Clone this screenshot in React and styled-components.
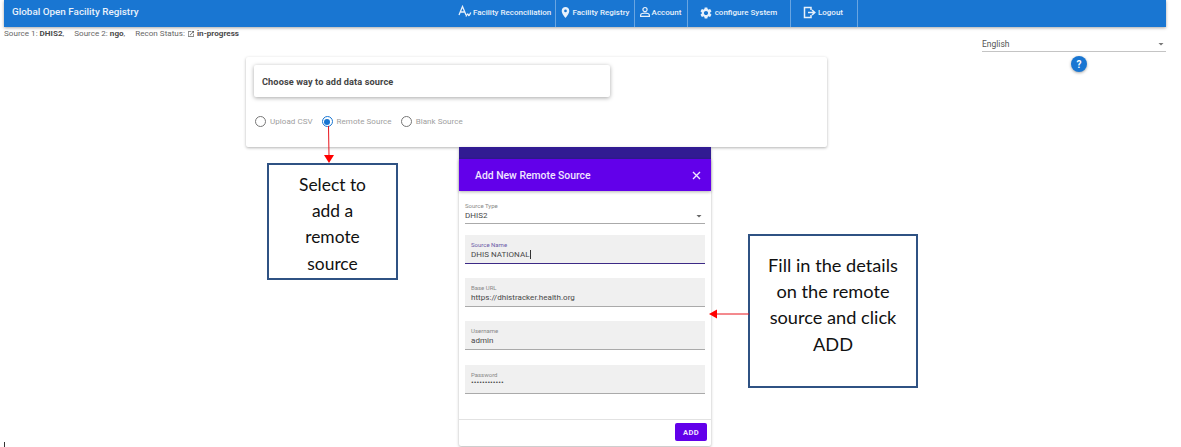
import React from "react";
import styled, { createGlobalStyle } from "styled-components";
import { MdLocationOn, MdSettings, MdArrowDropDown, MdOpenInNew } from "react-icons/md";

const Global = createGlobalStyle`
  html, body { margin: 0; padding: 0; background: #fff; }
  body { font-family: Roboto, "Liberation Sans", sans-serif; overflow: hidden; }
  * { box-sizing: border-box; }
`;

const Page = styled.div`
  position: relative;
  width: 1181px;
  height: 447px;
  overflow: hidden;
  background: #fff;
`;

const Bar = styled.header`
  display: flex;
  align-items: stretch;
  width: 1162px;
  height: 27px;
  margin-left: 4px;
  background: #1976d2;
  box-shadow: 0 1px 3px rgba(0, 0, 0, 0.35);
  color: #fff;
`;

const Title = styled.div`
  width: 447px;
  padding-left: 8px;
  line-height: 24px;
  font-size: 9.9px;
  font-weight: 500;
  color: #e8f1fb;
`;

const NavItem = styled.div`
  display: flex;
  align-items: center;
  justify-content: ${(p) => (p.$left ? "flex-start" : "center")};
  gap: ${(p) => p.$gap ?? 1}px;
  width: ${(p) => p.$w}px;
  padding: 0 ${(p) => (p.$left ? 0 : 2)}px ${(p) => p.$lift ?? 3}px ${(p) => p.$pad || 0}px;
  border-right: 1px solid rgba(255, 255, 255, 0.35);
  font-size: 8px;
  font-weight: 500;
  white-space: nowrap;
  color: #e8f1fb;
  svg { flex: none; }
`;

const StatusRow = styled.div`
  display: flex;
  justify-content: space-between;
  align-items: flex-start;
  height: 30px;
`;

const Status = styled.div`
  padding: 1px 0 0 4px;
  font-size: 8.1px;
  line-height: 10px;
  color: #666;
  white-space: pre;
  b { color: #4a4a4a; font-weight: 700; }
  svg { vertical-align: -2px; margin: 0 2px 0 0; }
`;

const LangColumn = styled.div`
  display: flex;
  flex-direction: column;
  align-items: center;
  width: 184px;
  margin: 10px 15px 0 0;
`;

const LangSelect = styled.div`
  display: flex;
  align-items: center;
  justify-content: space-between;
  width: 100%;
  height: 15px;
  border-bottom: 1px solid #c4c4c4;
  font-size: 8.5px;
  color: #555;
  svg { margin-right: -1px; color: #777; }
`;

const HelpDot = styled.div`
  display: flex;
  align-items: center;
  justify-content: center;
  width: 16px;
  height: 16px;
  margin: 4px 0 0 10px;
  border-radius: 50%;
  background: #1976d2;
  box-shadow: 0 1px 3px rgba(0, 0, 0, 0.35);
  color: #fff;
  font-size: 10px;
  font-weight: 700;
`;

const SourceCard = styled.section`
  width: 581px;
  height: 90px;
  margin-left: 246px;
  padding: 8px;
  border-radius: 2px;
  background: #fff;
  box-shadow: 0 1px 3px rgba(0, 0, 0, 0.3);
`;

const InnerCard = styled.div`
  display: flex;
  align-items: center;
  width: 356px;
  height: 32px;
  padding-left: 8px;
  border-radius: 2px;
  box-shadow: 0 1px 4px rgba(0, 0, 0, 0.35);
  font-size: 9.2px;
  letter-spacing: 0.1px;
  font-weight: 700;
  color: #444;
`;

const RadioRow = styled.div`
  display: flex;
  align-items: center;
  margin-top: 19px;
  padding-left: 1px;
`;

const Radio = styled.label`
  display: flex;
  align-items: center;
  gap: 4px;
  margin-right: 9px;
  font-size: 8px;
  letter-spacing: 0.05px;
  color: #a0a0a0;
`;

const Ring = styled.span`
  display: flex;
  align-items: center;
  justify-content: center;
  width: 11px;
  height: 11px;
  border-radius: 50%;
  border: 1px solid ${(p) => (p.$on ? "#1976d2" : "#777")};
  &::after {
    content: "";
    display: ${(p) => (p.$on ? "block" : "none")};
    width: 6px;
    height: 6px;
    border-radius: 50%;
    background: #1976d2;
  }
`;

const LowerRow = styled.div`
  display: flex;
  align-items: flex-start;
  padding-left: 267px;
`;

const Callout = styled.aside`
  flex: none;
  width: ${(p) => p.$w}px;
  height: ${(p) => p.$h}px;
  margin: ${(p) => p.$m};
  padding-top: ${(p) => p.$pad}px;
  border: 2px solid #2f5283;
  background: #fff;
  font-family: Lato, "Open Sans", sans-serif;
  font-size: ${(p) => p.$size}px;
  line-height: 26.2px;
  text-align: center;
  color: #111;
`;

const Dialog = styled.section`
  flex: none;
  width: 252px;
  height: 299px;
  margin-left: 61px;
  border-radius: 2px;
  background: #fff;
  box-shadow: 0 1px 3px rgba(0, 0, 0, 0.3);
`;

const DialogStrip = styled.div`
  height: 12px;
  background: #311b92;
`;

const DialogBar = styled.div`
  display: flex;
  align-items: center;
  justify-content: space-between;
  height: 32px;
  padding: 0 10px 0 16px;
  background: #6200ea;
  box-shadow: 0 1px 3px rgba(0, 0, 0, 0.3);
  color: #f0e6ff;
  font-size: 10.4px;
  font-weight: 500;
`;

const DialogBody = styled.div`
  height: 229px;
  padding: 12px 6px 0;
  border-bottom: 1px solid #e2e2e2;
`;

const TypeSelect = styled.div`
  display: flex;
  align-items: flex-end;
  justify-content: space-between;
  height: 21px;
  padding-bottom: 2px;
  border-bottom: 1px solid #aaa;
  svg { color: #666; margin-bottom: -1px; }
`;

const Field = styled.div`
  height: 29px;
  margin-top: ${(p) => p.$gap}px;
  padding: 6px 6px 0;
  background: #f0f0f0;
  border-bottom: 1px solid ${(p) => (p.$active ? "#3c2a86" : "#aaa")};
`;

const FieldLabel = styled.div`
  font-size: 6px;
  line-height: 7px;
  color: ${(p) => (p.$active ? "#6c5aa8" : "#888")};
`;

const FieldValue = styled.div`
  font-size: 8px;
  letter-spacing: 0.03px;
  line-height: 11px;
  margin-top: ${(p) => (p.$dots ? -1 : 1)}px;
  color: #484848;
  white-space: nowrap;
`;

const Caret = styled.span`
  border-left: 1px solid #333;
`;

const DialogFooter = styled.div`
  display: flex;
  justify-content: flex-end;
  padding: 3px 4px 0 0;
`;

const AddButton = styled.button`
  width: 32px;
  height: 18px;
  padding: 0;
  border: 0;
  border-radius: 2px;
  background: #6200ea;
  color: #f0e6ff;
  font-family: inherit;
  font-size: 7.6px;
  font-weight: 700;
  letter-spacing: 0.3px;
`;

const ArrowSvg = styled.svg`
  position: absolute;
  left: ${(p) => p.$x}px;
  top: ${(p) => p.$y}px;
`;

const Tick = styled.div`
  position: absolute;
  left: 4px;
  top: 442px;
  width: 1px;
  height: 5px;
  background: #333;
`;

const ReconIcon = () => (
  <svg width="14" height="14" viewBox="0 0 14 14" fill="none" stroke="currentColor" strokeWidth="1.3">
    <path d="M1 10 L4.5 1.5 L8 10 M2.4 7 H6.6" />
    <path d="M8 11.5 C9 8.5 10 8.5 10.4 10 C10.8 11.5 11.8 9.5 12.8 7.5" />
  </svg>
);

const AccountIcon = () => (
  <svg width="12" height="12" viewBox="0 0 12 12" fill="none" stroke="currentColor" strokeWidth="1.2">
    <circle cx="6" cy="3.6" r="2.1" />
    <path d="M1.6 10.4 V9.2 C1.6 7.8 4 7.2 6 7.2 C8 7.2 10.4 7.8 10.4 9.2 V10.4 Z" />
  </svg>
);

const LogoutIcon = () => (
  <svg width="13" height="13" viewBox="0 0 13 13" fill="none" stroke="currentColor" strokeWidth="1.5">
    <path d="M8 4 V1.5 H1.5 V11.5 H8 V9" />
    <path d="M5 6.5 H11 M9 4 L11.8 6.5 L9 9" />
  </svg>
);

const CloseIcon = () => (
  <svg width="9" height="9" viewBox="0 0 9 9" fill="none" stroke="currentColor" strokeWidth="1.4">
    <path d="M1 1 L8 8 M8 1 L1 8" />
  </svg>
);

const nav = [
  { w: 105, pad: 7, left: true, label: "Facility Reconciliation", icon: <ReconIcon /> },
  { w: 79, label: "Facility Registry", icon: <MdLocationOn size={13} /> },
  { w: 53, label: "Account", icon: <AccountIcon /> },
  { w: 103, label: "configure System", icon: <MdSettings size={14} />, gap: 2, lift: 2 },
  { w: 67, label: "Logout", icon: <LogoutIcon />, gap: 2, lift: 2 },
];

const radios = [
  { label: "Upload CSV" },
  { label: "Remote Source", on: true },
  { label: "Blank Source" },
];

const fields = [
  { label: "Source Name", value: "DHIS NATIONAL", gap: 11, active: true },
  { label: "Base URL", value: "https://dhistracker.health.org", gap: 14 },
  { label: "Username", value: "admin", gap: 14 },
  { label: "Password", value: "••••••••••••", gap: 15, dots: true },
];

const App = () => {
  return (
    <Page>
      <Global />
      <Bar>
        <Title>Global Open Facility Registry</Title>
        {nav.map((n) => (
          <NavItem key={n.label} $w={n.w} $pad={n.pad} $left={n.left} $gap={n.gap} $lift={n.lift}>
            {n.icon}
            {n.label}
          </NavItem>
        ))}
      </Bar>
      <StatusRow>
        <Status>
          Source 1: <b>DHIS2</b>,{"     "}Source 2: <b>ngo</b>,{"     "}Recon Status: <MdOpenInNew size={8} />
          <b>in-progress</b>
        </Status>
        <LangColumn>
          <LangSelect>
            English
            <MdArrowDropDown size={12} />
          </LangSelect>
          <HelpDot>?</HelpDot>
        </LangColumn>
      </StatusRow>
      <SourceCard>
        <InnerCard>Choose way to add data source</InnerCard>
        <RadioRow>
          {radios.map((r) => (
            <Radio key={r.label}>
              <Ring $on={r.on} />
              {r.label}
            </Radio>
          ))}
        </RadioRow>
      </SourceCard>
      <LowerRow>
        <Callout $w={131} $h={117} $m="16px 0 0 0" $pad={7} $size={17.4}>
          Select to
          <br />
          add a
          <br />
          remote
          <br />
          source
        </Callout>
        <Dialog>
          <DialogStrip />
          <DialogBar>
            Add New Remote Source
            <CloseIcon />
          </DialogBar>
          <DialogBody>
            <TypeSelect>
              <div>
                <FieldLabel>Source Type</FieldLabel>
                <FieldValue>DHIS2</FieldValue>
              </div>
              <MdArrowDropDown size={12} />
            </TypeSelect>
            {fields.map((f) => (
              <Field key={f.label} $gap={f.gap} $active={f.active}>
                <FieldLabel $active={f.active}>{f.label}</FieldLabel>
                <FieldValue $dots={f.dots}>
                  {f.value}
                  {f.active && <Caret />}
                </FieldValue>
              </Field>
            ))}
          </DialogBody>
          <DialogFooter>
            <AddButton>ADD</AddButton>
          </DialogFooter>
        </Dialog>
        <Callout $w={170} $h={154} $m="87px 0 0 37px" $pad={16} $size={18.2}>
          Fill in the details
          <br />
          on the remote
          <br />
          source and click
          <br />
          ADD
        </Callout>
      </LowerRow>
      <ArrowSvg $x={322} $y={126} width="14" height="38" viewBox="0 0 14 38">
        <path d="M6.5 0 L7 30" stroke="#e8141c" strokeWidth="1" fill="none" />
        <path d="M2 29 H12 L7 37 Z" fill="#f00" />
      </ArrowSvg>
      <ArrowSvg $x={708} $y={308} width="42" height="12" viewBox="0 0 42 12">
        <path d="M8 6 H41" stroke="#e8141c" strokeWidth="1" fill="none" />
        <path d="M9 1.5 V10.5 L1 6 Z" fill="#f00" />
      </ArrowSvg>
      <Tick />
    </Page>
  );
};

export default App;
